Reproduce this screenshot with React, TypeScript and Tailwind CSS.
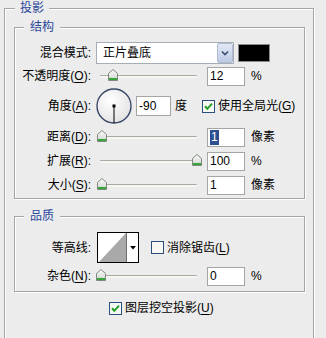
import type { CSSProperties, ReactNode } from "react";

const ETCH =
  "border border-[#a5a5a5] shadow-[1px_1px_0_#ffffff,inset_1px_1px_0_#ffffff]";

function Group({
  title,
  legend,
  className,
  children,
}: {
  title: string;
  legend: string;
  className: string;
  children: ReactNode;
}) {
  return (
    <div className={`relative ${ETCH} ${className}`}>
      <span
        className={`absolute -top-[9px] h-[16px] bg-[#ececec] leading-[16px] text-[#2a479b] ${legend}`}
      >
        {title}
      </span>
      {children}
    </div>
  );
}

function Label({ text, k }: { text: string; k?: string }) {
  return (
    <span className="w-[76px] shrink-0 whitespace-nowrap text-right">
      {text}
      {k && (
        <>
          (<span className="underline underline-offset-2">{k}</span>)
        </>
      )}
      :
    </span>
  );
}

function Thumb({ style }: { style: CSSProperties }) {
  return (
    <svg className="absolute top-0" style={style} width="10" height="12" viewBox="0 0 10 12">
      <defs>
        <linearGradient id="tg" x1="0" y1="0" x2="0" y2="1">
          <stop offset="0" stopColor="#fbfbfb" />
          <stop offset="1" stopColor="#cfd3cf" />
        </linearGradient>
      </defs>
      <path d="M0.5 4.5 L5 0.5 L9.5 4.5 V11.5 H0.5 Z" fill="url(#tg)" stroke="#7d8a7d" />
      <rect x="1" y="9" width="8" height="2" fill="#37a63a" />
    </svg>
  );
}

function Slider({ pct }: { pct: number }) {
  return (
    <div className="relative ml-[5px] h-[14px] w-[106px] shrink-0">
      <div className="absolute left-[4px] right-[5px] top-[6px] h-[3px] rounded-[1px] border-t border-[#a9a9a9] bg-[#f6f6ee]" />
      <Thumb style={{ left: Math.round(pct * 97) }} />
    </div>
  );
}

function Field({ value, w = "w-[38px]", selected }: { value: string; w?: string; selected?: boolean }) {
  return (
    <div className={`flex h-[19px] ${w} shrink-0 items-center border border-[#a5a5a5] bg-white pl-[2px]`}>
      {selected ? (
        <span className="bg-[#2d4f92] px-[1px] leading-[15px] text-white">{value}</span>
      ) : (
        <span>{value}</span>
      )}
    </div>
  );
}

function Check() {
  return (
    <svg width="13" height="13" viewBox="0 0 13 13" className="shrink-0">
      <rect x="0.5" y="0.5" width="12" height="12" fill="#f7f7f4" stroke="#2a4f7c" />
      <path d="M3 6.3 L5.3 8.8 L10 3.6" fill="none" stroke="#24a024" strokeWidth="2" />
    </svg>
  );
}

function Box() {
  return <div className="h-[13px] w-[13px] shrink-0 border border-[#2a4f7c] bg-[#f7f7f4]" />;
}

function SliderRow({ text, k, pct, value, unit, selected }: { text: string; k: string; pct: number; value: string; unit: string; selected?: boolean }) {
  return (
    <div className="flex h-[24px] items-center">
      <Label text={text} k={k} />
      <Slider pct={pct} />
      <div className="ml-[5px]">
        <Field value={value} selected={selected} />
      </div>
      <span className="ml-[6px]">{unit}</span>
    </div>
  );
}

export default function App() {
  return (
    <div className="h-[338px] w-[326px] overflow-hidden bg-[#ececec] pl-[4px] pt-[8px] font-['Liberation_Sans','Noto_Sans_CJK_SC',sans-serif] text-[12px] text-black">
      <Group title="投影" legend="left-[10px] px-[5px]" className="h-[400px] w-[310px] pl-[9px]">
        <Group title="结构" legend="left-[9px] px-[6px]" className="mt-[18px] w-[291px] pb-[1px] pt-[13px]">
          <div className="flex h-[24px] items-center">
            <Label text="混合模式" />
            <div className="ml-[5px] flex h-[22px] w-[138px] items-center border border-[#a7adb6] bg-white">
              <span className="flex-1 pl-[6px]">正片叠底</span>
              <div className="flex h-[20px] w-[16px] items-center justify-center rounded-[2px] border border-[#aebbd3] bg-gradient-to-b from-[#e2e9f5] to-[#bccbe4]">
                <svg width="8" height="6" viewBox="0 0 8 6">
                  <path d="M1 1.5 L4 4.5 L7 1.5" fill="none" stroke="#3b4c6e" strokeWidth="1.6" />
                </svg>
              </div>
            </div>
            <div className="ml-[4px] h-[18px] w-[32px] border border-[#8a8a8a] bg-black" />
          </div>
          <div className="flex h-[22px] items-center">
            <Label text="不透明度" k="O" />
            <Slider pct={0.12} />
            <div className="ml-[5px]">
              <Field value="12" />
            </div>
            <span className="ml-[6px]">%</span>
          </div>
          <div className="flex h-[38px] items-center">
            <Label text="角度" k="A" />
            <svg width="36" height="36" viewBox="0 0 36 36" className="ml-[5px] shrink-0">
              <defs>
                <radialGradient id="dg" cx="0.4" cy="0.35" r="0.7">
                  <stop offset="0" stopColor="#ffffff" />
                  <stop offset="1" stopColor="#e2e2e2" />
                </radialGradient>
              </defs>
              <circle cx="18" cy="18" r="17" fill="url(#dg)" stroke="#3a4868" strokeWidth="1.4" />
              <rect x="16.5" y="16.5" width="3" height="3" fill="#000" />
              <line x1="18" y1="18" x2="18" y2="35" stroke="#000" strokeWidth="1" />
            </svg>
            <div className="ml-[4px] flex h-[20px] w-[35px] items-center border border-[#a5a5a5] bg-white pl-[2px]">-90</div>
            <span className="ml-[4px]">度</span>
            <div className="ml-[15px] flex items-center">
              <Check />
              <span className="ml-[3px]">
                使用全局光(<span className="underline underline-offset-2">G</span>)
              </span>
            </div>
          </div>
          <SliderRow text="距离" k="D" pct={0.01} value="1" unit="像素" selected />
          <SliderRow text="扩展" k="R" pct={0.99} value="100" unit="%" />
          <SliderRow text="大小" k="S" pct={0.01} value="1" unit="像素" />
        </Group>

        <Group title="品质" legend="left-[9px] px-[6px]" className="mt-[17px] w-[291px] pb-[3px] pt-[14px]">
          <div className="flex h-[33px] items-center">
            <Label text="等高线" />
            <div className="ml-[6px] flex h-[31px] w-[42px] border border-black bg-white">
              <div className="h-full w-[29px] border-r border-[#6e6e6e]">
                <svg width="28" height="29" viewBox="0 0 28 29">
                  <path d="M1 29 L28 0 V29 Z" fill="#a9a9a9" />
                </svg>
              </div>
              <div className="flex flex-1 items-center justify-center">
                <svg width="6" height="4" viewBox="0 0 6 4">
                  <path d="M0 0 H6 L3 3.5 Z" fill="#000" />
                </svg>
              </div>
            </div>
            <div className="ml-[12px] flex items-center">
              <Box />
              <span className="ml-[3px]">
                消除锯齿(<span className="underline underline-offset-2">L</span>)
              </span>
            </div>
          </div>
          <SliderRow text="杂色" k="N" pct={0} value="0" unit="%" />
        </Group>

        <div className="mt-[6px] flex h-[20px] items-center pl-[95px]">
          <Check />
          <span className="ml-[3px]">
            图层挖空投影(<span className="underline underline-offset-2">U</span>)
          </span>
        </div>
      </Group>
    </div>
  );
}
